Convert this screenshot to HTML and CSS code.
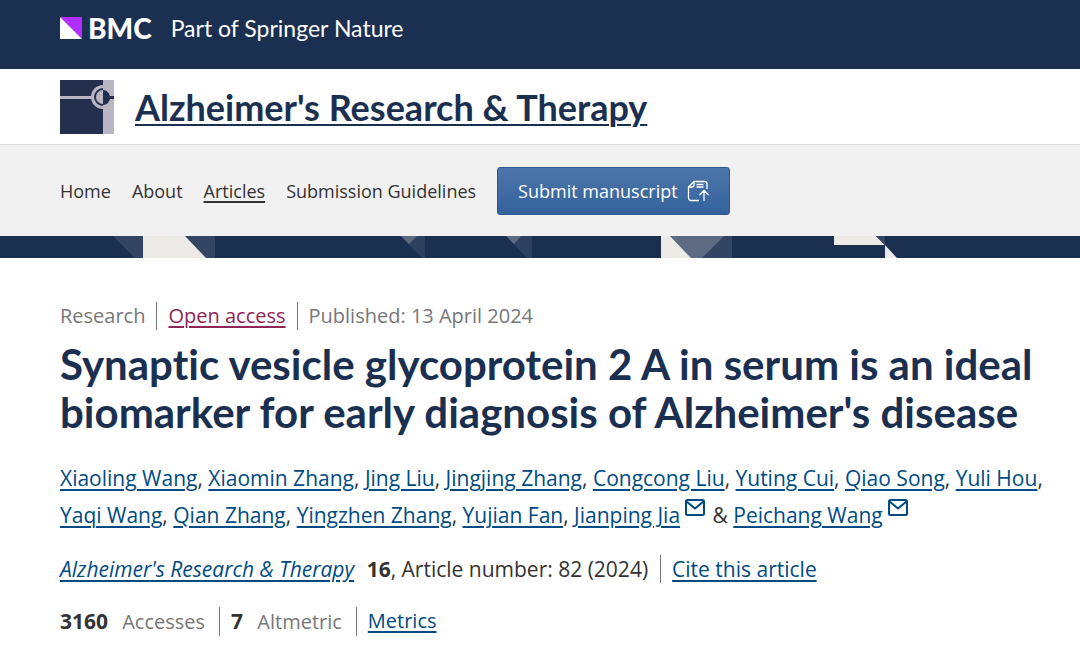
FILE: index.html
```html
<!DOCTYPE html>
<html lang="en">
<head>
  <meta charset="UTF-8">
  <title>Alzheimer's Research &amp; Therapy</title>
  <link rel="stylesheet" href="styles.css">
</head>
<body>
  <header>
    <div class="brand-bar">
      <a class="brand" href="#">
        <svg class="brand-mark" viewBox="0 0 22 22" aria-hidden="true">
          <path fill="#b12fff" d="M0 0h22v22z"/>
          <path fill="#fff" d="M0 0v22h22z"/>
        </svg>
        <span class="brand-name">BMC</span>
      </a>
      <span class="brand-tagline">Part of Springer Nature</span>
    </div>

    <div class="journal-bar">
      <svg class="journal-logo" viewBox="0 0 54 54" aria-hidden="true">
        <path fill="#242e4d" d="M0 0h54v54H0z"/>
        <path fill="#b9b5c3" d="M43 0h11v54H43zM0 16h34v3H0z"/>
        <circle cx="43" cy="17" r="12" fill="#b9b5c3"/>
        <path fill="#242e4d" d="M43 8a9 9 0 0 0 0 18v-2a7 7 0 0 1 0-14z"/>
        <path fill="#242e4d" d="M43 10c4 0 6 3 7 6h4v3h-4c-1 3-3 6-7 6z"/>
      </svg>
      <a class="journal-title" href="#">Alzheimer's Research &amp; Therapy</a>
    </div>

    <nav class="main-nav">
      <a href="#">Home</a>
      <a href="#">About</a>
      <a class="active" href="#">Articles</a>
      <a href="#">Submission Guidelines</a>
      <button class="submit-btn" type="button">
        Submit manuscript
        <svg class="submit-icon" viewBox="0 0 22 22" aria-hidden="true">
          <path d="M12 20.500H4a2.500 2.500 0 0 1-2.500-2.500V7L7 1.500h10.500A2.500 2.500 0 0 1 20 4v5M1.500 7H5a2 2 0 0 0 2-2V1.500M9.500 4.500h7M9.500 7h7M17 21V11M12.500 15l4.500-4.500 4.500 4.500"/>
        </svg>
      </button>
    </nav>

    <svg class="pattern" viewBox="0 0 1080 22" preserveAspectRatio="xMinYMin slice" aria-hidden="true">
      <path fill="#1b3051" d="M0 0h1080v22H0z"/>
      <path fill="#334563" d="M113 0h30v22h-8zM185 0h30v22h-9z"/>
      <path fill="#ebeae6" d="M143 0h42l21 22h-63z"/>
      <path fill="#2d4060" d="M401 0h24v22h-3zM506 0h26v22h-5z"/>
      <path fill="#5d6b82" d="M401 0h16l-8 8zM506 0h15l-7 8z"/>
      <path fill="#334563" d="M670 0h62v22h-41z"/>
      <path fill="#5d6b82" d="M670 0h54l-22 22h-11z"/>
      <path fill="#ebeae6" d="M661 0h9l21 22h-30zM834 0h42l9 9h-51zM885 9l12 13h-12z"/>
      <path fill="#334563" d="M876 0h9v9z"/>
    </svg>
  </header>

  <main class="article">
    <ul class="identifiers">
      <li>Research</li>
      <li><a class="open-access" href="#">Open access</a></li>
      <li>Published: 13 April 2024</li>
    </ul>

    <h1>Synaptic vesicle glycoprotein 2 A in serum is an ideal biomarker for early diagnosis of Alzheimer's disease</h1>

    <p class="authors">
      <a href="#">Xiaoling Wang</a>, <a href="#">Xiaomin Zhang</a>, <a href="#">Jing Liu</a>, <a href="#">Jingjing Zhang</a>, <a href="#">Congcong Liu</a>, <a href="#">Yuting Cui</a>, <a href="#">Qiao Song</a>, <a href="#">Yuli Hou</a>,
      <a href="#">Yaqi Wang</a>, <a href="#">Qian Zhang</a>, <a href="#">Yingzhen Zhang</a>, <a href="#">Yujian Fan</a>, <a href="#">Jianping Jia</a><svg class="mail" viewBox="0 0 20 17" aria-hidden="true"><rect x="1" y="1" width="18" height="15" rx="1.500"/><path d="M1.500 2.500L10 9.500l8.500-7"/></svg>
      &amp; <a href="#">Peichang Wang</a><svg class="mail" viewBox="0 0 20 17" aria-hidden="true"><rect x="1" y="1" width="18" height="15" rx="1.500"/><path d="M1.500 2.500L10 9.500l8.500-7"/></svg>
    </p>

    <p class="citation">
      <span class="source"><a href="#"><i>Alzheimer's Research &amp; Therapy</i></a> <b>16</b>, Article number: 82 (2024)</span>
      <a class="divided" href="#">Cite this article</a>
    </p>

    <ul class="metrics">
      <li><b>3160</b> Accesses</li>
      <li><b>7</b> Altmetric</li>
      <li><a href="#">Metrics</a></li>
    </ul>
  </main>
</body>
</html>
```

FILE: styles.css
```css
body {
  margin: 0;
  background: #fff;
  color: #333;
  font-family: "Segoe UI", "Open Sans", sans-serif;
  font-size: 20px;
}
a {
  color: #004b83;
  text-decoration-thickness: 2px;
  text-underline-offset: 3px;
}
ul {
  list-style: none;
  margin: 0;
  padding: 0;
}

.brand-bar {
  display: flex;
  align-items: center;
  gap: 19px;
  box-sizing: border-box;
  height: 69px;
  padding: 0 60px 14px;
  background: #1b3051;
  color: #fff;
  font-family: Lato, sans-serif;
}
.brand {
  display: flex;
  align-items: center;
  gap: 6px;
  color: #fff;
  text-decoration: none;
}
.brand-mark {
  width: 22px;
  height: 22px;
}
.brand-name {
  font-size: 28px;
  font-weight: 900;
}
.brand-tagline {
  font-size: 23px;
}

.journal-bar {
  display: flex;
  align-items: center;
  gap: 21px;
  height: 75px;
  padding: 0 60px;
  border-bottom: 1px solid #dadada;
}
.journal-logo {
  width: 54px;
  height: 54px;
}
.journal-title {
  color: #1b3051;
  font-family: Lato, sans-serif;
  font-size: 36px;
  font-weight: 700;
}

.main-nav {
  display: flex;
  align-items: center;
  gap: 21px;
  height: 91px;
  padding: 0 60px;
  background: #f1f1f1;
}
.main-nav a {
  color: #333;
  font-size: 18px;
  text-decoration: none;
}
.main-nav a.active {
  text-decoration: underline 2px;
}
.submit-btn {
  display: flex;
  align-items: center;
  gap: 9px;
  height: 48px;
  padding: 0 20px;
  border: 1px solid #2a5896;
  border-radius: 3px;
  background: linear-gradient(#4d76a9, #33629d);
  color: #fff;
  font-family: inherit;
  font-size: 18px;
}
.submit-icon {
  width: 22px;
  height: 22px;
  fill: none;
  stroke: #fff;
  stroke-width: 1.3;
}
.pattern {
  display: block;
  width: 100%;
  height: 22px;
}

.article {
  padding: 44px 36px 0 60px;
}
.identifiers,
.metrics {
  display: flex;
  color: #777;
  line-height: 28px;
}
.identifiers li + li,
.metrics li + li {
  margin-left: 11px;
  padding-left: 11px;
  border-left: 1px solid #777;
}
.metrics li + li {
  margin-left: 14px;
}
.open-access {
  color: #8e2555;
}
h1 {
  margin: 10px 0 24px;
  color: #1b3051;
  font-family: Lato, sans-serif;
  font-size: 42px;
  font-weight: 700;
  font-variant-ligatures: none;
  line-height: 48px;
}
.authors {
  margin: 0;
  font-size: 21px;
  line-height: 37px;
}
.mail {
  width: 20px;
  height: 17px;
  margin: 0 2px 0 5px;
  vertical-align: 7px;
  fill: none;
  stroke: #004b83;
  stroke-width: 2;
}
.citation {
  display: flex;
  margin: 21px 0 24px;
  font-size: 21px;
  line-height: 28px;
}
.citation b {
  margin-left: 7px;
}
.divided {
  margin-left: 12px;
  padding-left: 11px;
  border-left: 1px solid #777;
}
.metrics b {
  margin-right: 9px;
  color: #333;
  font-size: 21px;
}
```
